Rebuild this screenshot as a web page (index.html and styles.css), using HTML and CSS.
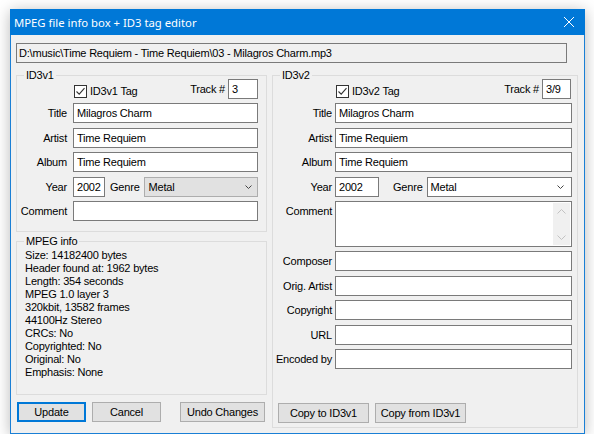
FILE: index.html
```html
<!DOCTYPE html>
<html lang="en">
<head>
<meta charset="UTF-8" />
<title>MPEG file info box + ID3 tag editor</title>
<link rel="stylesheet" href="styles.css">
</head>
<body>
<div class="window">
  <div class="titlebar">
    <span class="caption">MPEG file info box + ID3 tag editor</span>
    <svg class="close" width="10" height="10" viewBox="0 0 10 10"><path d="M0 0L10 10M10 0L0 10" stroke="#fff" stroke-width="1"/></svg>
  </div>

  <div class="client">
    <div class="path">D:\music\Time Requiem - Time Requiem\03 - Milagros Charm.mp3</div>

    <div class="columns">
      <div class="left">
        <!-- ID3v1 tag -->
        <div class="group id3v1">
          <span class="legend">ID3v1</span>
          <div class="fields">
            <div class="tagrow">
              <span class="check"><svg width="13" height="13" viewBox="0 0 13 13"><rect x="0.5" y="0.5" width="12" height="12" fill="#fff" stroke="#333"/><path d="M2.5 6.5L5.2 9.2L10.5 3.2" fill="none" stroke="#333" stroke-width="1.1"/></svg></span>
              <span class="check-label">ID3v1 Tag</span>
              <span class="track-label">Track #</span>
              <input class="edit track" value="3">
            </div>
            <label>Title</label><input class="edit" value="Milagros Charm">
            <label>Artist</label><input class="edit" value="Time Requiem">
            <label>Album</label><input class="edit" value="Time Requiem">
            <label>Year</label>
            <div class="yearrow">
              <input class="edit year" value="2002">
              <span class="genre-label">Genre</span>
              <div class="combo list">Metal<svg width="7" height="4" viewBox="0 0 7 4"><path d="M0.5 0.5L3.5 3.5L6.5 0.5" fill="none" stroke="#444"/></svg></div>
            </div>
            <label>Comment</label><input class="edit" value="">
          </div>
        </div>

        <!-- stream info -->
        <div class="group info">
          <span class="legend">MPEG info</span>
          <div>Size: 14182400 bytes</div>
          <div>Header found at: 1962 bytes</div>
          <div>Length: 354 seconds</div>
          <div>MPEG 1.0 layer 3</div>
          <div>320kbit, 13582 frames</div>
          <div>44100Hz Stereo</div>
          <div>CRCs: No</div>
          <div>Copyrighted: No</div>
          <div>Original: No</div>
          <div>Emphasis: None</div>
        </div>

        <div class="buttons">
          <button class="btn default update">Update</button>
          <button class="btn cancel">Cancel</button>
          <button class="btn undo">Undo Changes</button>
        </div>
      </div>

      <!-- ID3v2 tag -->
      <div class="group id3v2">
        <span class="legend">ID3v2</span>
        <div class="fields">
          <div class="tagrow">
            <span class="check"><svg width="13" height="13" viewBox="0 0 13 13"><rect x="0.5" y="0.5" width="12" height="12" fill="#fff" stroke="#333"/><path d="M2.5 6.5L5.2 9.2L10.5 3.2" fill="none" stroke="#333" stroke-width="1.1"/></svg></span>
            <span class="check-label">ID3v2 Tag</span>
            <span class="track-label">Track #</span>
            <input class="edit track" value="3/9">
          </div>
          <label>Title</label><input class="edit" value="Milagros Charm">
          <label>Artist</label><input class="edit" value="Time Requiem">
          <label>Album</label><input class="edit" value="Time Requiem">
          <label>Year</label>
          <div class="yearrow">
            <input class="edit year" value="2002">
            <span class="genre-label">Genre</span>
            <div class="combo">Metal<svg width="7" height="4" viewBox="0 0 7 4"><path d="M0.5 0.5L3.5 3.5L6.5 0.5" fill="none" stroke="#444"/></svg></div>
          </div>
          <label class="top">Comment</label>
          <div class="memo">
            <div class="scroll">
              <svg width="9" height="5" viewBox="0 0 9 5"><path d="M0.5 4.5L4.5 0.5L8.5 4.5" fill="none" stroke="#c2c2c2"/></svg>
              <svg width="9" height="5" viewBox="0 0 9 5"><path d="M0.5 0.5L4.5 4.5L8.5 0.5" fill="none" stroke="#c2c2c2"/></svg>
            </div>
          </div>
          <label>Composer</label><input class="edit" value="">
          <label>Orig. Artist</label><input class="edit" value="">
          <label>Copyright</label><input class="edit" value="">
          <label>URL</label><input class="edit" value="">
          <label>Encoded by</label><input class="edit" value="">
        </div>
        <div class="copy-buttons">
          <button class="btn copy">Copy to ID3v1</button>
          <button class="btn copy">Copy from ID3v1</button>
        </div>
      </div>
    </div>
  </div>
</div>
</body>
</html>
```

FILE: styles.css
```css
/* Classic Win32 dialog look */
* {
  box-sizing: border-box;
}
body {
  margin: 0;
  background: #fff;
  font-family: 'Liberation Sans', Arial, sans-serif;
  font-size: 11px;
  letter-spacing: -0.2px;
  color: #000;
}
.window {
  width: 575px;
  margin: 9px 0 0 10px;
  box-shadow: 0 2px 14px rgba(0, 0, 0, 0.28);
}
.titlebar {
  height: 26px;
  background: #0078d7;
  color: #fff;
  display: flex;
  align-items: center;
  justify-content: space-between;
  padding: 0 11px 0 4px;
}
.caption {
  font-family: 'Noto Sans', sans-serif;
  font-size: 11.3px;
  letter-spacing: 0;
}
.client {
  height: 399px;
  background: #f0f0f0;
  border: 1px solid #1a7fd5;
  border-top: 0;
  padding: 8px 0 0 5px;
}
.path {
  width: 551px;
  height: 20px;
  border: 1px solid #7a7a7a;
  padding-left: 2px;
  line-height: 18px;
  white-space: nowrap;
}
.columns {
  display: flex;
  gap: 5px;
  margin-top: 12px;
}
.left {
  width: 251px;
}

/* group boxes */
.group {
  position: relative;
  border: 1px solid #dcdcdc;
}
.legend {
  position: absolute;
  top: -7px;
  left: 7px;
  padding: 0 2px;
  background: #f0f0f0;
  line-height: 13px;
}
.fields {
  display: grid;
  grid-auto-rows: 20px;
  row-gap: 4.4px;
  align-items: center;
}
.fields label {
  text-align: right;
  white-space: nowrap;
}
.fields label.top {
  align-self: start;
  padding-top: 4px;
  line-height: 13px;
}
.id3v1 {
  height: 157px;
  padding-top: 3px;
}
.id3v1 .fields {
  grid-template-columns: 50px 185px;
  column-gap: 6px;
}
.id3v2 {
  width: 306px;
  height: 353px;
  display: flex;
  flex-direction: column;
  padding: 3px 5px 4px 0;
}
.id3v2 .fields {
  grid-template-columns: 59px 237px;
  grid-template-rows: repeat(5, 20px) 46px repeat(5, 20px);
  column-gap: 3px;
}

/* controls */
.edit {
  width: 100%;
  height: 20px;
  margin: 0;
  border: 1px solid #7a7a7a;
  background: #fff;
  padding: 0 3px;
  font: inherit;
  letter-spacing: inherit;
  color: #000;
  outline: none;
}
.tagrow {
  grid-column: 2;
  display: flex;
  align-items: center;
  height: 20px;
}
.check {
  display: flex;
  margin: 5px 0 0 1px;
}
.check-label {
  margin: 4px 0 0 3px;
}
.track-label {
  margin-left: auto;
  margin-right: 3px;
}
.edit.track {
  width: 30px;
}
.id3v2 .edit.track {
  width: 29px;
  margin-right: 1px;
}
.yearrow {
  display: flex;
  align-items: center;
}
.edit.year {
  width: 32px;
  flex: none;
}
.id3v2 .edit.year {
  width: 44px;
}
.genre-label {
  margin: 0 4px 0 5px;
}
.id3v2 .genre-label {
  margin-left: 14px;
}
.combo {
  flex: 1;
  height: 20px;
  display: flex;
  align-items: center;
  justify-content: space-between;
  border: 1px solid #7a7a7a;
  background: #fff;
  padding: 0 7px 0 3px;
}
.combo.list {
  background: #e1e1e1;
  border-color: #adadad;
  padding: 0 5px 0 4px;
}
.memo {
  height: 46px;
  border: 1px solid #7a7a7a;
  background: #fff;
  display: flex;
  justify-content: flex-end;
}
.scroll {
  width: 17px;
  margin: 1px 1px 1px 0;
  background: #f0f0f0;
  display: flex;
  flex-direction: column;
  justify-content: space-between;
  align-items: center;
  padding: 6px 0 5px;
}

/* info text */
.info {
  height: 154px;
  margin-top: 9px;
  padding: 7px 0 0 8px;
  line-height: 13px;
}

/* push buttons */
.btn {
  height: 20px;
  padding: 0;
  border: 1px solid #adadad;
  background: #e1e1e1;
  font: inherit;
  letter-spacing: inherit;
  color: #000;
}
.btn.default {
  border: 2px solid #0078d7;
}
.buttons {
  display: flex;
  margin-top: 7px;
  padding: 0 2px 0 1px;
}
.update,
.cancel {
  width: 69px;
}
.cancel {
  margin-left: 6px;
}
.undo {
  width: 85px;
  margin-left: auto;
}
.copy-buttons {
  margin-top: auto;
  display: flex;
  gap: 6px;
  padding-left: 5px;
}
.copy {
  width: 91px;
}
```
